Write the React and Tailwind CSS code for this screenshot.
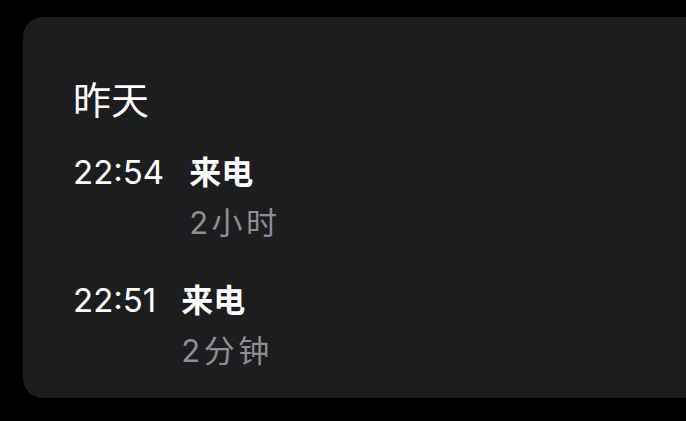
const calls = [
  { time: "22:54", type: "来电", duration: "2小时" },
  { time: "22:51", type: "来电", duration: "2分钟" },
];

const cjk = { fontFamily: '"Noto Sans CJK SC", sans-serif' };
const mixed = { fontFamily: 'Inter, "Noto Sans CJK SC", sans-serif' };

export default function App() {
  return (
    <div className="w-[686px] h-[421px] overflow-hidden bg-black pt-[17px] pl-[23px]">
      <div className="w-[700px] h-[381px] rounded-[20px] bg-[#1d1d1f] pl-[50px] pt-[59px] text-white">
        <h2 className="text-[38px] leading-[44px] font-normal" style={cjk}>
          昨天
        </h2>
        <ul className="mt-[30px] flex flex-col gap-[37px]">
          {calls.map((c) => (
            <li key={c.time} className="flex items-baseline gap-[25px]">
              <span className="text-[33px] leading-[40px]" style={mixed}>
                {c.time}
              </span>
              <div>
                <div className="text-[32px] leading-[40px] font-bold" style={cjk}>
                  {c.type}
                </div>
                <div
                  className="mt-[15px] text-[31px] leading-[36px] tracking-[3.5px] text-[#8e8e93]"
                  style={mixed}
                >
                  {c.duration}
                </div>
              </div>
            </li>
          ))}
        </ul>
      </div>
    </div>
  );
}
